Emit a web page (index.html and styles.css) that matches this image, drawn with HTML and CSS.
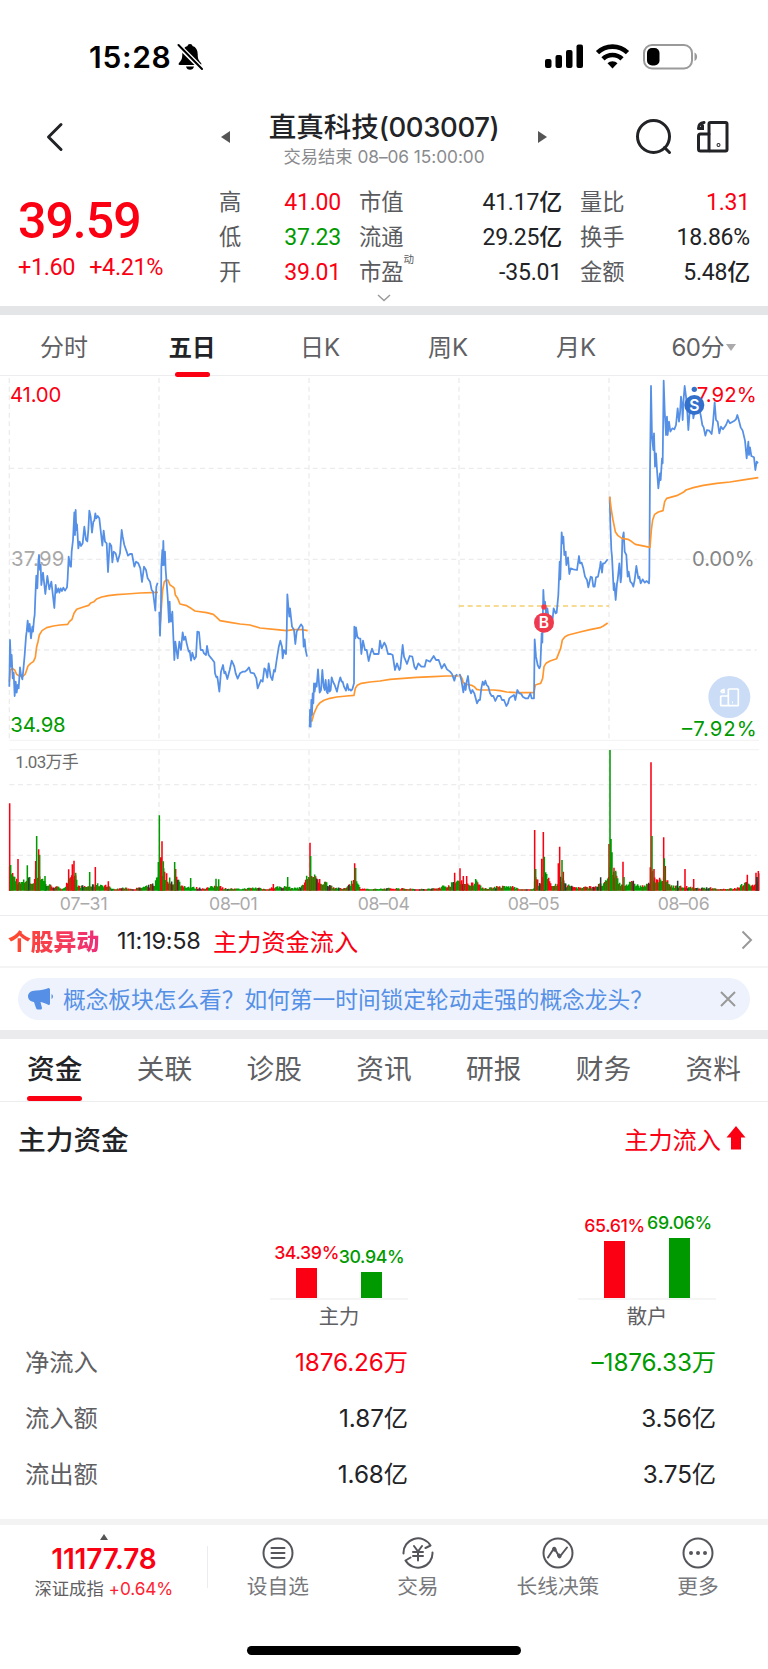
FILE: index.html
```
<!DOCTYPE html>
<html lang="zh-CN">
<head>
<meta charset="utf-8">
<title>直真科技(003007)</title>
<link rel="stylesheet" href="styles.css">
</head>
<body>
<div class="status">
	<span class="time">15:28</span>
	<svg class="bell" width="26" height="28" viewBox="0 0 26 28">
		<path d="M13 1c-1.500 0-2.300 .9-2.500 2C7 4 5.300 7 5.300 11c0 5-1 6.500-3.300 9-.8 1-.4 2 .8 2h20.400c1.200 0 1.600-1 .8-2-2.300-2.500-3.300-4-3.300-9 0-4-1.700-7-5.200-8-.2-1.100-1-2-2.500-2z"/>
		<path d="M9 23.500h8c-.4 2-2 3.300-4 3.300s-3.600-1.300-4-3.300z"/>
		<path d="M2 3l23 23" stroke="#fff" stroke-width="5"/>
		<path d="M1.500 2l23.500 24" stroke="#000" stroke-width="2" stroke-linecap="round"/>
	</svg>
	<svg class="sys" width="156" height="28" viewBox="0 0 156 28">
		<rect x="1" y="16" width="6.500" height="9" rx="2"/>
		<rect x="11.500" y="12" width="6.500" height="13" rx="2"/>
		<rect x="22" y="7" width="6.500" height="18" rx="2"/>
		<rect x="32.500" y="1.500" width="6.500" height="23.500" rx="2"/>
		<g fill="none" stroke="#000" stroke-width="4.600">
			<path d="M53.500 9.700a21.500 21.500 0 0 1 30 0"/>
			<path d="M59 15.900a13.500 13.500 0 0 1 19 0"/>
		</g>
		<path d="M68.500 25.500l-5-5.200a7 7 0 0 1 10 0z"/>
		<rect x="100" y="2" width="48" height="23.500" rx="8" fill="none" stroke="#9a9a9a" stroke-width="2"/>
		<rect x="103" y="5" width="12.500" height="17.500" rx="5"/>
		<path d="M150.500 9.500c3.500 1.500 3.500 7 0 8.500z" fill="#9a9a9a"/>
	</svg>
</div>

<div class="head">
	<svg class="back" width="20" height="30" viewBox="0 0 20 30"><path d="M16 2.500L3.500 15 16 27.500"/></svg>
	<i class="prev"></i>
	<div class="title">
		<h1>直真科技<span>(003007)</span></h1>
		<p>交易结束 <span>08–06 15:00:00</span></p>
	</div>
	<i class="next"></i>
	<svg class="search" width="38" height="38" viewBox="0 0 38 38"><circle cx="18.500" cy="18.500" r="16"/><path d="M29.500 29.500l5 5"/></svg>
	<svg class="layout" width="34" height="34" viewBox="0 0 34 34">
		<rect x="13" y="2.500" width="18" height="28.500" rx="1.500"/>
		<path d="M13 14H4.500q-2 0-2 2v13q0 2 2 2H13"/>
		<path d="M2.500 8.500q0-5.500 5.500-6M3 8.500h3.500V5.500"/>
		<circle cx="22.500" cy="25" r=".5"/>
	</svg>
</div>

<div class="quote">
	<div class="price">
		<b>39.59</b>
		<p><span>+1.60</span><span>+4.21%</span></p>
	</div>
	<dl class="c1">
		<dt>高</dt><dd class="red">41.00</dd>
		<dt>低</dt><dd class="green">37.23</dd>
		<dt>开</dt><dd class="red">39.01</dd>
	</dl>
	<dl class="c2">
		<dt>市值</dt><dd>41.17亿</dd>
		<dt>流通</dt><dd>29.25亿</dd>
		<dt>市盈<sup>动</sup></dt><dd>-35.01</dd>
	</dl>
	<dl class="c3">
		<dt>量比</dt><dd class="red">1.31</dd>
		<dt>换手</dt><dd>18.86%</dd>
		<dt>金额</dt><dd>5.48亿</dd>
	</dl>
	<svg class="more" width="14" height="8" viewBox="0 0 14 8"><path d="M1 1l6 5.500L13 1"/></svg>
</div>

<ul class="tabs">
	<li>分时</li>
	<li class="on">五日</li>
	<li>日K</li>
	<li>周K</li>
	<li>月K</li>
	<li><span>60</span>分<i></i></li>
</ul>

<!-- 3 units = 1px -->
<svg class="chart" width="768" height="539" viewBox="0 18 2304 1617">
	<g class="grid">
		<path d="M28 24V1110M477 24V1110M927 24V1110M1377 24V1110M1827 24V1110M477 1140V1562M927 1140V1562M1377 1140V1562M1827 1140V1562" />
		<path d="M28 295H2270M28 568H2270M28 840H2270M28 1244H2270M28 1350H2270M28 1456H2270" />
		<path class="solid" d="M28 1111H2277M28 1139H2277" />
	</g>
	<path class="cost" d="M1377 708H1827"/>
	<text class="scale grey" x="33" y="589" textLength="160">37.99</text>
	<text class="scale red" x="30" y="96" textLength="154">41.00</text>
	<text class="scale green" x="31" y="1086" textLength="166">34.98</text>
	<text class="scale mid" x="2076" y="589" textLength="188">0.00%</text>
	<text class="scale red" x="2090" y="96" textLength="180">7.92%</text>
	<text class="scale green" x="2046" y="1097" textLength="224">–7.92%</text>

	<g class="avg">
		<polyline points="28,935 31,900 37,895 44,900 50,913 58,918 70,918 76,912 84,888 92,880 100,875 106,862 110,830 114,815 118,795 126,782 140,773 160,768 180,765 203,763 208,755 216,748 222,730 230,718 250,711 266,706 272,699 282,695 290,687 305,681 325,677 350,674 380,672 420,669 474,667"/>
		<polyline points="481,760 485,700 488,660 493,635 499,630 504,630 510,645 518,650 523,655 526,675 533,685 540,702 560,707 573,715 585,723 620,728 640,733 650,742 660,752 690,757 720,762 750,765 780,774 830,779 860,782 880,779 905,779 923,782"/>
	</g>
	<g class="avg" transform="translate(900 0)">
		<polyline points="35,1055 42,1030 52,1008 60,998 72,991 90,985 110,981 140,978 162,976 166,955 172,946 184,940 210,936 240,933 270,928 310,925 350,922 400,920 440,918 476,918"/>
		<polyline points="480,915 486,925 490,938 500,943 515,946 524,951 530,958 540,960 580,960 600,962 620,966 650,968 702,968 706,945 715,942 722,940 728,925 732,890 738,880 750,873 770,866 776,850 782,835 787,810 795,800 805,795 840,786 870,779 900,773 910,768 923,759"/>
	</g>
	<g class="line">
		<polyline points="28,950 30,810 33,890 35,855 38,925 41,908 44,978 47,935 50,968 53,945 56,955 60,892 63,915 67,928 70,900 74,855 78,800 80,785 83,752 86,785 89,762 93,805 97,770 99,785 102,748 104,735 106,680 109,617 112,655 115,575 117,555 120,600 122,585 124,645 129,608 136,672 142,618 148,658 154,635 163,714 167,645 170,668 175,655 178,668 182,655 186,663 190,653 195,662 201,652 203,625 206,560 211,590 213,590 215,545 219,510 223,427 225,495 227,420 229,480 231,463 235,535 239,515 243,528 248,520 253,470 258,510 262,514 265,480 268,422 272,440 276,488 280,455 283,452 286,430 289,445 293,438 298,445 303,490 307,527 311,482 315,515 320,520 324,606 329,520 334,528 337,577 341,545 347,550 353,575 360,550 365,480 368,500 373,525 380,545 384,557 390,552 396,552 403,590 408,575 415,580 421,595 426,636 432,590 438,600 443,625 450,635 455,660 459,665 462,690 466,722 469,650 473,638"/>
		<polyline points="478,725 480,797 483,700 484,590 487,540 488,585 490,513 492,585 495,545 497,600 500,640 503,680 507,757 509,695 511,750 513,755 517,725 520,800 523,870 526,815 533,865 538,815 543,840 548,787 552,810 556,800 560,820 566,845 569,842 573,872 577,848 583,868 588,860 592,785 597,786 602,840 608,840 612,850 618,855 621,828 626,855 634,865 643,877 645,910 649,922 652,920 658,965 663,905 669,885 673,910 676,905 682,927 689,900 695,872 699,880 703,890 707,910 713,926 720,910 728,905 735,905 741,900 747,892 752,908 762,910 769,925 773,955 777,945 783,930 788,935 793,895 797,898 802,923 806,880 812,920 817,930 822,900 825,905 830,870 836,832 841,812 846,830 848,865 852,840 858,852 860,800 862,673 865,710 868,740 870,715 876,770 882,780 886,822 890,785 896,775 903,763 908,770 911,830 914,808 917,840 921,860"/>
	</g>
	<g class="line" transform="translate(900 0)">
		<polyline points="29,1072 30,1020 32,1070 34,990 36,1035 38,970 40,1000 42,940 44,965 47,940 50,950 54,898 57,940 59,968 63,960 67,900 71,950 74,960 77,930 80,965 83,970 86,930 89,965 92,960 95,922 99,935 104,945 111,965 116,940 121,922 125,935 128,935 132,950 138,962 142,942 146,960 150,958 153,962 157,958 162,940 163,770 166,805 168,772 172,800 176,805 181,806 184,852 189,812 195,840 200,840 206,873 211,852 216,836 222,852 236,852 240,812 245,835 253,818 258,828 264,852 272,852 278,855 285,900 291,880 298,900 301,895 308,825 312,860 321,882 329,858 337,860 343,890 348,898 355,880 364,890 374,890 379,870 390,875 401,858 408,870 416,870 425,895 433,882 441,898 450,905 456,912 463,932 467,917 472,913"/>
		<polyline points="479,912 484,930 490,967 494,940 497,960 500,935 504,918 508,955 513,970 517,960 523,970 527,985 531,1000 536,990 540,990 544,955 548,935 552,945 556,932 560,945 565,950 570,970 575,978 580,978 586,993 593,978 601,978 606,990 612,990 619,1008 624,1000 628,985 634,980 642,975 646,990 652,960 658,970 664,972 668,980 676,985 684,985 691,970 695,985 702,985 704,808 708,860 713,885 718,895 721,888 725,790 727,818 730,660 732,700 735,695 738,730 742,715 746,745 750,760 755,740 758,745 761,715 767,730 770,728 775,675 779,575 781,628 785,487 788,520 790,500 793,555 797,545 799,585 804,562 808,612 812,595 820,598 831,600 837,558 840,580 845,578 850,595 855,620 861,630 865,652 872,620 876,622 880,650 884,650 888,622 894,620 900,590 902,575 906,608 909,580 914,580 923,568"/>
	</g>
	<g transform="translate(1590 0)">
		<polyline class="line" points="239,380 241,460 244,540 246,560 249,620 251,660 253,640 257,690 261,640 263,630 268,580 272,637 274,620 277,510 281,487 284,545 289,555 293,620 296,605 301,635 306,640 310,650 314,630 319,588 325,625 328,620 332,640 338,628 344,638 350,633 357,640 358,620 360,300 363,48 366,200 370,240 372,190 375,290 378,250 381,300 385,355 390,310 392,330 396,265 398,280 401,32 404,120 408,195 411,140 413,195 417,155 421,185 427,175 433,178 438,165 443,115 447,155 450,130 453,80 456,105 458,150 461,85 464,48 468,80 471,110 475,180 478,140 482,90 486,85 490,145 495,120 500,90 506,110 512,135 517,165 521,172 526,197 531,180 538,182 545,192 549,160 554,97 558,150 563,155 568,190 573,170 579,178 588,165 594,150 600,160 612,153 618,148 622,135 627,152 632,172 638,182 645,212 650,265 655,215 657,255 660,232 664,258 672,262 676,300 680,275 684,280"/>
		<polyline class="avg" points="239,380 244,420 249,450 256,485 264,497 276,505 294,508 304,514 316,523 335,527 360,532 364,480 368,450 374,433 385,426 399,422 404,395 410,385 440,377 460,367 468,360 490,353 520,346 560,340 600,336 650,328 685,323"/>
		<g class="buy"><circle cx="42" cy="711" r="8"/><circle cx="42" cy="758" r="30"/><text x="42" y="775">B</text></g>
		<g class="sell"><circle cx="493" cy="58" r="8"/><circle cx="493" cy="105" r="30"/><text x="493" y="122">S</text></g>
		<circle cx="598" cy="981" r="63" fill="#cbdcf7"/>
		<path d="M595 957h28q2 0 2 2v46q0 2-2 2h-49q-2 0-2-2v-25q0-2 2-2h21M595 957v50M573 967q0-8 11-9M574 967h8v-6M606 997h3" fill="none" stroke="#fff" stroke-width="5"/>
	</g>

	<g id="volume" transform="translate(0 1110)"></g>
	<text class="vol" x="46" y="1194" textLength="190">1.03万手</text>
	<g class="date">
		<text x="179" y="1619" textLength="144">07–31</text>
		<text x="627" y="1619" textLength="146">08–01</text>
		<text x="1073" y="1619" textLength="157">08–04</text>
		<text x="1523" y="1619" textLength="156">08–05</text>
		<text x="1973" y="1619" textLength="156">08–06</text>
	</g>
</svg>

<div class="news">
	<b>个股异动</b>
	<span class="at">11:19:58</span>
	<span class="red">主力资金流入</span>
	<svg width="12" height="20" viewBox="0 0 12 20"><path d="M1.500 1.500L10 10l-8.500 8.500"/></svg>
</div>

<div class="tip-wrap">
	<div class="tip">
		<svg class="horn" width="26" height="22" viewBox="0 0 26 22">
			<path d="M8 2.500c5 0 9-1 12.500-2.500q1.500 0 1.500 1.500v14q0 1.500-1.500 1.500C18 15.500 15.500 14.500 12.500 14l1.500 6q0 1.500-1.500 1.500H10q-1.500 0-2-1.500L6 14C2 13.500 0 11 0 8.200S2.500 2.500 8 2.500z"/>
			<path d="M23.500 6c2 1 2 4 0 5z"/>
		</svg>
		<span>概念板块怎么看？如何第一时间锁定轮动走强的概念龙头？</span>
		<svg class="close" width="16" height="16" viewBox="0 0 16 16"><path d="M1 1l14 14M15 1L1 15"/></svg>
	</div>
</div>

<ul class="nav">
	<li class="on">资金</li>
	<li>关联</li>
	<li>诊股</li>
	<li>资讯</li>
	<li>研报</li>
	<li>财务</li>
	<li>资料</li>
</ul>

<div class="sec">
	<h2>主力资金</h2>
	<span>主力流入</span>
	<svg width="20" height="24" viewBox="0 0 20 24"><path d="M10 0l9.500 11.500H15V23.500H5V11.500H.5z"/></svg>
</div>

<div class="flow">
	<div class="pair">
		<div class="bars">
			<div class="bar red"><em>34.39%</em><i style="height:30px"></i></div>
			<div class="bar green"><em>30.94%</em><i style="height:26px"></i></div>
		</div>
		<p>主力</p>
	</div>
	<div class="pair">
		<div class="bars">
			<div class="bar red"><em>65.61%</em><i style="height:57px"></i></div>
			<div class="bar green"><em>69.06%</em><i style="height:60px"></i></div>
		</div>
		<p>散户</p>
	</div>
</div>

<div class="rows">
	<span>净流入</span><b class="red">1876.26万</b><b class="green">–1876.33万</b>
	<span>流入额</span><b>1.87亿</b><b>3.56亿</b>
	<span>流出额</span><b>1.68亿</b><b>3.75亿</b>
</div>

<div class="foot">
	<div class="index">
		<i></i>
		<b>11177.78</b>
		<p>深证成指 <span>+0.64%</span></p>
	</div>
	<div class="item">
		<svg width="32" height="32" viewBox="0 0 32 32"><circle cx="16" cy="16" r="14.500"/><path d="M9.500 11h13M9.500 16h13M9.500 21h13"/></svg>
		设自选
	</div>
	<div class="item">
		<svg width="32" height="32" viewBox="0 0 32 32"><path d="M1.500 16.500A14.500 14.500 0 0 1 28.500 8.500L23.500 11M30.500 15.500A14.500 14.500 0 0 1 3.500 23.500L8.500 20.500M12 9l4 5.500L20 9M11 15h10M11 19h10M16 15v8.500"/></svg>
		交易
	</div>
	<div class="item">
		<svg width="32" height="32" viewBox="0 0 32 32"><circle cx="16" cy="16" r="14.500"/><path d="M6 20.500l6.200-9.500 5.300 9L25 10.500"/><path class="dots" d="M12.200 11.800l.5 .8M17 18.500l.5 .8"/></svg>
		长线决策
	</div>
	<div class="item">
		<svg width="32" height="32" viewBox="0 0 32 32"><circle cx="16" cy="16" r="14.500"/><path class="dots" d="M9 16h.01M16 16h.01M23 16h.01"/></svg>
		更多
	</div>
</div>
<div class="home"></div>
<script src="chart.js"></script>
</body>
</html>
```
FILE: styles.css
```
* {
	margin:0;
	padding:0;
	box-sizing:border-box;
}
body {
	width:768px;
	background:#fff;
	color:#222326;
	font-family:Inter,"Noto Sans CJK SC",sans-serif;
	overflow-x:hidden;
}
ul {
	list-style:none;
}
svg {
	display:block;
	flex:none;
}
.red {
	color:#fb0012;
}
.green {
	color:#009a00;
}

/* status bar */
.status {
	height:100px;
	padding:43px 68px 0 89px;
	display:flex;
	align-items:flex-start;
	color:#000;
}
.time {
	width:88px;
	font-size:30px;
	line-height:29px;
	font-weight:600;
	letter-spacing:0.700px;
}
.sys {
	margin-left:auto;
}

/* header */
.head {
	height:82px;
	padding:0 38px 0 45px;
	display:flex;
	align-items:flex-start;
}
.back {
	margin-top:22px;
	fill:none;
	stroke:#222326;
	stroke-width:3;
	stroke-linecap:round;
	stroke-linejoin:round;
}
.prev,
.next {
	width:9px;
	height:12px;
	margin-top:31px;
	border:6px solid transparent;
}
.prev {
	margin-left:156px;
	border-left:0;
	border-right:9px solid #555;
}
.next {
	border-right:0;
	border-left:9px solid #555;
}
.title {
	width:308px;
	text-align:center;
}
.title h1 {
	padding-top:10px;
	font-size:27.500px;
	line-height:34px;
	font-weight:500;
	white-space:nowrap;
}
.title h1 span {
	font-weight:450;
	letter-spacing:-0.400px;
}
.title p {
	margin-top:3px;
	font-size:17.300px;
	line-height:20px;
	color:#8a8b8e;
}
.title p span {
	letter-spacing:-0.050px;
}
.search,
.layout {
	fill:none;
	stroke:#222326;
	stroke-width:3;
	stroke-linecap:round;
}
.search {
	margin:18px 23px 0 auto;
}
.layout {
	margin-top:20px;
}

/* quote */
.quote {
	position:relative;
	height:133px;
	padding-left:18px;
	border-bottom:9px solid #e4e5e7;
	display:flex;
	font-family:Roboto,"Noto Sans CJK SC",sans-serif;
}
.price {
	width:201px;
	color:#fb0012;
}
.price b {
	display:block;
	padding-top:11px;
	font-size:50px;
	line-height:56px;
	font-weight:500;
	letter-spacing:-1px;
}
.price p {
	display:flex;
	gap:14px;
	margin-top:3px;
	font-size:23.500px;
	line-height:30px;
	font-weight:450;
	letter-spacing:-0.400px;
}
.quote dl {
	display:grid;
	grid-template-columns:auto 1fr;
	grid-auto-rows:35px;
	line-height:35px;
	margin-top:3px;
}
.quote dt {
	font-size:22.300px;
	color:#5a5b5e;
}
.quote dd {
	font-size:23px;
	font-weight:450;
	letter-spacing:-0.200px;
	text-align:right;
}
.quote sup {
	position:absolute;
	margin-top:-13px;
	font-size:10.500px;
	line-height:35px;
}
.c1 {
	width:122px;
}
.c2 {
	width:203px;
	margin-left:18px;
}
.c3 {
	width:170px;
	margin-left:18px;
}
.more {
	position:absolute;
	left:377px;
	bottom:4px;
	fill:none;
	stroke:#999;
	stroke-width:1.500;
}

/* period tabs */
.tabs {
	height:61px;
	display:flex;
	border-bottom:1px solid #ededef;
}
.tabs li {
	position:relative;
	flex:1;
	line-height:65px;
	font-size:24px;
	text-align:center;
	color:#5f6063;
}
.tabs .on {
	color:#222326;
	font-weight:600;
	font-size:23.500px;
}
.tabs .on:after {
	content:"";
	position:absolute;
	left:47px;
	bottom:-2px;
	width:35px;
	height:5px;
	border-radius:2.500px;
	background:#fb0012;
}
.tabs span {
	letter-spacing:-0.600px;
}
.tabs i {
	display:inline-block;
	margin:0 0 5px 2px;
	border:5px solid transparent;
	border-bottom:0;
	border-top:7px solid #aaa;
}

/* chart */
.grid path {
	fill:none;
	stroke:#ececee;
	stroke-width:4;
	stroke-dasharray:15 11;
}
.grid .solid {
	stroke-dasharray:none;
	stroke:#f2f2f3;
	stroke-width:3;
}
.cost {
	stroke:#f3cf6e;
	stroke-width:5;
	stroke-dasharray:15 11;
}
.line,
.avg {
	fill:none;
	stroke:#5590e6;
	stroke-width:5.300;
	stroke-linejoin:round;
}
.avg {
	stroke:#ff962e;
	stroke-width:5;
}
.chart text {
	font-size:61px;
}
.scale.red {
	fill:#fb0012;
}
.scale.green {
	fill:#009a00;
}
.scale.grey {
	fill:#a8a8a8;
}
.scale.mid {
	fill:#868686;
}
.buy {
	fill:#ee3a4c;
}
.sell {
	fill:#3370cc;
}
.chart .buy text,
.chart .sell text {
	fill:#fff;
	font-size:47px;
	font-weight:600;
	text-anchor:middle;
}
.chart .vol {
	font-family:Roboto,"Noto Sans CJK SC",sans-serif;
	font-size:51px;
	fill:#6c6c6c;
}
.chart .date text {
	font-size:53px;
	fill:#aaa;
}

/* news */
.news {
	height:53px;
	padding:0 15px 2px 8px;
	display:flex;
	align-items:center;
	border-top:1px solid #ededef;
	border-bottom:2px solid #f4f4f5;
	font-size:24.200px;
}
.news b {
	width:109px;
	font-size:22.800px;
	font-weight:900;
	background:linear-gradient(90deg,#ff4b2b,#ee2f78 90px);
	-webkit-background-clip:text;
	background-clip:text;
	color:transparent;
}
.news .at {
	width:96px;
	font-size:23.500px;
	letter-spacing:-0.250px;
}
.news svg {
	margin-left:auto;
	fill:none;
	stroke:#999;
	stroke-width:2;
}
.tip-wrap {
	height:71px;
	padding:10px 18px 0;
	border-bottom:9px solid #ebebed;
}
.tip {
	height:42px;
	padding:0 14px 0 10px;
	border-radius:21px;
	background:#edf2fc;
	display:flex;
	align-items:center;
	font-size:22.700px;
	color:#5590e6;
}
.horn {
	margin-right:9px;
	fill:#5590e6;
}
.tip span {
	padding-bottom:2px;
	white-space:nowrap;
}
.close {
	margin-left:auto;
	stroke:#999;
	stroke-width:2;
}

/* second nav */
.nav {
	height:63px;
	padding:0 27px;
	display:flex;
	justify-content:space-between;
	border-bottom:1px solid #ededef;
}
.nav li {
	position:relative;
	line-height:60px;
	font-size:27.700px;
	color:#5f6063;
}
.nav .on {
	color:#222326;
	font-weight:500;
}
.nav .on:after {
	content:"";
	position:absolute;
	left:0;
	right:0;
	bottom:0;
	height:5px;
	border-radius:2.500px;
	background:#fb0012;
}
.sec {
	height:76px;
	padding:0 22px 4px 18px;
	display:flex;
	align-items:center;
	gap:5px;
	font-size:24.200px;
	color:#fb0012;
}
.sec h2 {
	margin-right:auto;
	font-size:27.700px;
	font-weight:500;
	color:#222326;
}
.sec svg {
	fill:#fb0012;
}

/* fund flow */
.flow {
	height:156px;
	padding:0 52px 0 270px;
	display:flex;
	justify-content:space-between;
	align-items:flex-end;
}
.pair {
	width:138px;
	text-align:center;
}
.bars {
	height:100px;
	display:flex;
	justify-content:center;
	align-items:flex-end;
	gap:2px;
	border-bottom:2px solid #f5f5f6;
}
.bar {
	width:63px;
	display:flex;
	flex-direction:column;
	align-items:center;
}
.bar em {
	font-style:normal;
	font-size:17.800px;
	line-height:20px;
	font-weight:500;
	letter-spacing:-0.400px;
	margin-bottom:5px;
}
.bar i {
	width:21px;
	background:currentColor;
}
.pair p {
	height:34px;
	line-height:34px;
	font-size:20.300px;
	color:#5f6063;
}
.rows {
	height:185px;
	padding:0 52px 0 25px;
	display:grid;
	grid-template-columns:1fr 220px 308px;
	grid-auto-rows:56px;
	line-height:56px;
	font-size:24.300px;
}
.rows span {
	color:#5f6063;
}
.rows b {
	font-weight:400;
	text-align:right;
	letter-spacing:-0.100px;
}

/* bottom bar */
.foot {
	height:108px;
	border-top:6px solid #f3f3f3;
	display:flex;
}
.index {
	width:208px;
	position:relative;
	text-align:center;
}
.index:after {
	content:"";
	position:absolute;
	right:0;
	top:21px;
	height:42px;
	width:1px;
	background:#ececee;
}
.index i {
	position:absolute;
	left:100px;
	top:9px;
	border:4px solid transparent;
	border-top:0;
	border-bottom:6px solid #555;
}
.index b {
	display:block;
	padding-top:17px;
	font-size:28px;
	line-height:34px;
	font-weight:600;
	color:#fb0012;
	letter-spacing:-0.200px;
}
.index p {
	font-size:17.300px;
	line-height:25px;
	color:#5f6063;
}
.index p span {
	color:#ff2231;
	letter-spacing:-0.100px;
}
.item {
	width:140.200px;
	padding-top:12px;
	display:flex;
	flex-direction:column;
	align-items:center;
	font-size:20.700px;
	line-height:36px;
	color:#77787b;
}
.item svg {
	fill:none;
	stroke:#55565c;
	stroke-width:2;
	stroke-linejoin:round;
	stroke-linecap:round;
}
.item .dots {
	stroke-width:4;
}
.home {
	width:274px;
	height:9px;
	margin:19px auto 0;
	border-radius:5px;
	background:#000;
}
```
FILE: chart.js
```
// x, height of the ordinary bars, interpolated between the points
var base = [28,70,60,25,75,35,85,50,95,25,108,60,122,50,140,22,160,15,190,8,205,30,225,55,235,15,265,15,300,22,320,18,335,8,345,4,365,10,400,6,440,14,465,25,475,60,490,70,500,50,515,30,530,45,545,18,570,12,610,8,640,14,655,22,670,8,720,6,760,10,780,10,800,4,820,12,860,14,880,8,905,14,925,55,945,45,965,30,985,25,1000,12,1030,6,1065,40,1080,10,1110,4,1160,8,1200,8,1260,5,1310,8,1330,16,1350,20,1380,40,1400,20,1430,35,1440,15,1460,8,1490,14,1540,14,1560,4,1600,3,1607,50,1620,20,1635,60,1650,28,1670,22,1690,50,1700,20,1740,10,1780,15,1805,22,1820,30,1830,70,1845,60,1860,25,1870,20,1900,28,1920,15,1945,20,1957,60,1980,35,1995,45,2010,20,2030,15,2070,12,2085,8,2140,10,2150,5,2210,8,2230,25,2260,22,2276,50];
var peaks = "29r262 32g77 54r95 82g76 107r89 110g164 116r124 119g108 135g44 206r64 217r79 222r90 227g54 269g56 286r71 325r28 475g86 478g226 482r100 486r148 490g88 524g86 527r65 572g38 648g36 656g34 820r20 863g41 930r144 932g104 1064r82 1067g68 1364r54 1380r67 1390r44 1400r44 1427g35 1604r182 1607g65 1625r96 1630r176 1633g102 1675r82 1679r132 1686g92 1690r57 1802k40 1827r140 1830g422 1833g155 1836g115 1842r69 1847g60 1869r87 1872g41 1900k30 1951r70 1953r385 1956g164 1962r65 1991r160 1993g97 1996r74 2033k30 2055r65 2081r35 2242r48 2268r54 2271k41 2275r59";
var colors = {r:"#fb0012", g:"#009a00", k:"#333"};
var paths = {r:"", g:"", k:""};
var i = 0, seed = 7;
function rnd() {
	seed = (seed * 16807) % 2147483647;
	return seed / 2147483647;
}
function bar(x, c, h) {
	paths[c] += "M" + x + " 452v-" + h.toFixed(1);
}
function draw(box) {
	for (var c in paths) {
		box.innerHTML += '<path d="' + paths[c] + '" stroke="' + colors[c] + '" stroke-width="4.6"/>';
		paths[c] = "";
	}
}
var vol = document.getElementById("volume");
for (var x = 29; x < 2277; x += 3) {
	while (base[i + 2] < x) {
		i += 2;
	}
	var k = (x - base[i]) / (base[i + 2] - base[i]);
	var h = base[i + 1] + (base[i + 3] - base[i + 1]) * k;
	var r = rnd();
	bar(x, r < .47 ? "r" : r < .93 ? "g" : "k", Math.max(4, h * (.5 + .6 * rnd())));
}
draw(vol);
peaks.split(" ").forEach(function (p) {
	var m = p.match(/(\d+)([rgk])(\d+)/);
	bar(m[1], m[2], +m[3]);
});
draw(vol);
```
